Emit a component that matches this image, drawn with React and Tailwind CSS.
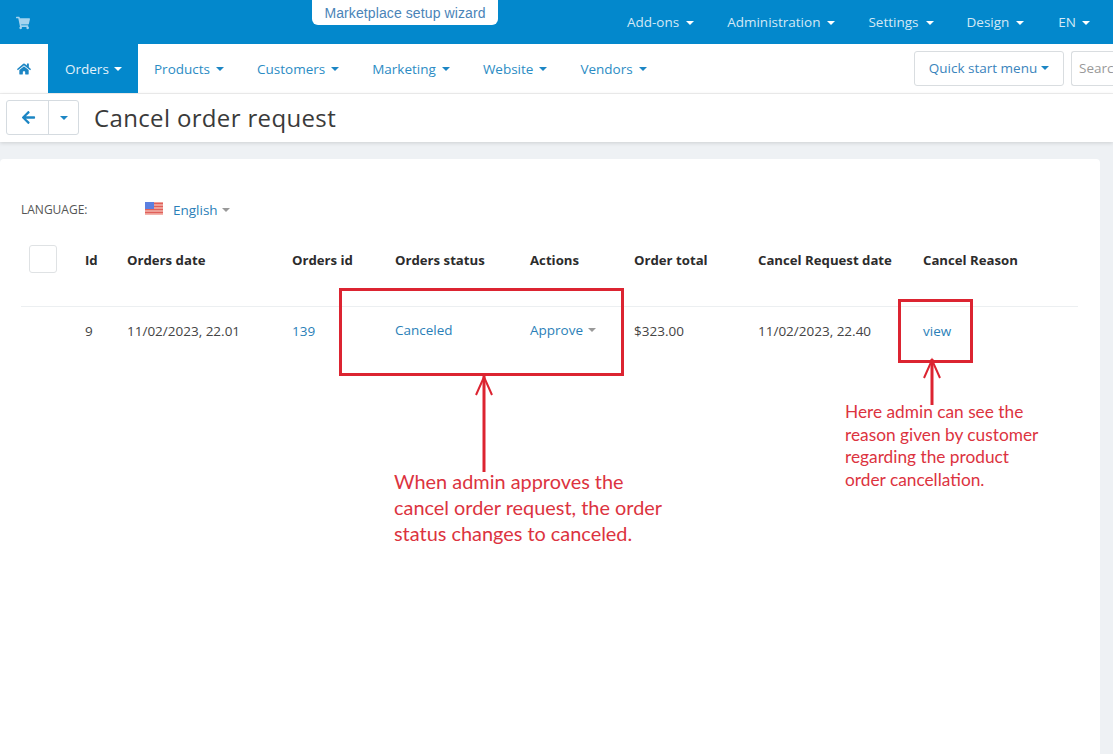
import { FaShoppingCart, FaHome, FaArrowLeft } from "react-icons/fa";

const topLinks = ["Add-ons", "Administration", "Settings", "Design"];
const navLinks = ["Products", "Customers", "Marketing", "Website", "Vendors"];

function Caret({ className = "" }) {
  return (
    <svg viewBox="0 0 8 4" className={`w-2 h-1 fill-current ${className}`}>
      <path d="M0 0h8L4 4z" />
    </svg>
  );
}

function Flag() {
  return (
    <svg viewBox="0 0 18 13" className="w-[18px] h-[13px]">
      <rect width="18" height="13" fill="#f3b4ac" />
      <path d="M0 1.5h18M0 4.5h18M0 7.5h18M0 10.5h18" stroke="#e0605a" strokeWidth="1.4" />
      <rect width="9" height="7" fill="#5b7fe0" />
    </svg>
  );
}

function Arrow({ className, height }) {
  return (
    <svg viewBox={`0 0 20 ${height}`} className={className} fill="none" stroke="#dc2431">
      <path d={`M10 2V${height}`} strokeWidth="3" />
      <path d="M2 21L10 3l8 18" strokeWidth="2" />
    </svg>
  );
}

export default function App() {
  return (
    <div className="relative h-[754px] overflow-hidden bg-[#eef1f4] font-['Open_Sans',sans-serif] text-[13.5px] text-[#333]">
      <header className="relative h-11 bg-[#0388cc] flex items-center pl-4 pr-[23px] pt-[1px] text-[#d4e9f6]">
        <FaShoppingCart className="text-sm text-[#a5d3ee]" />
        <div className="absolute left-[312px] top-0 w-[186px] h-[25px] bg-white rounded-b-md flex items-center justify-center font-['Liberation_Sans',sans-serif] text-sm tracking-[0.1px] text-[#4a84b8]">
          Marketplace setup wizard
        </div>
        <nav className="ml-auto flex items-center gap-[33px]">
          {topLinks.map((link) => (
            <span key={link} className="flex items-center gap-[7px]">
              {link}
              <Caret className="text-white" />
            </span>
          ))}
          <span className="ml-[1px] flex items-center gap-[6px]">
            EN
            <Caret className="text-white" />
          </span>
        </nav>
      </header>

      <div className="h-[50px] bg-white border-b border-[#f0f0f0] flex items-stretch text-[#2b8cc4] overflow-hidden">
        <div className="w-12 flex items-center pl-[17px]">
          <FaHome className="text-sm text-[#1c86c4]" />
        </div>
        <div className="w-[90px] bg-[#0388cc] text-[#e2f1fa] flex items-center pl-[17px] pt-[1px] gap-[5px]">
          Orders
          <Caret className="text-white" />
        </div>
        <nav className="flex items-center pl-4 pt-[1px] gap-[33px]">
          {navLinks.map((link) => (
            <span key={link} className="flex items-center gap-[6px]">
              {link}
              <Caret className="text-[#1c86c4]" />
            </span>
          ))}
        </nav>
        <div className="ml-auto flex items-center gap-[7px] pb-[1px] shrink-0 w-[199px]">
          <button className="w-[150px] h-[35px] shrink-0 border border-[#d9dde0] rounded-[3px] flex items-center justify-center gap-[4px] text-[#3a84bc]">
            Quick start menu
            <Caret className="text-[#1c86c4]" />
          </button>
          <div className="h-[35px] flex-1 border border-r-0 border-[#d9dde0] rounded-l-[3px] flex items-center pl-[7px] text-[#999] overflow-hidden">
            Search
          </div>
        </div>
      </div>

      <div className="h-12 bg-white shadow-[0_1px_4px_rgba(0,0,0,0.14)] flex items-center pl-[6px] pb-[1px]">
        <div className="flex h-[35px] w-[73px] border border-[#d5dbe0] rounded-[3px]">
          <div className="w-[42px] pl-[2px] border-r border-[#d5dbe0] flex items-center justify-center">
            <FaArrowLeft className="text-[15px] text-[#1c86c4]" />
          </div>
          <div className="flex-1 flex items-center justify-center">
            <Caret className="text-[#1c86c4]" />
          </div>
        </div>
        <h1 className="ml-[15px] text-2xl tracking-[0.35px] text-[#3a3a3a]">Cancel order request</h1>
      </div>

      <main className="mt-[17px] w-[1100px] h-[600px] bg-white rounded-t-[4px] pl-[21px] pr-[22px] pt-[41px]">
        <div className="flex items-center h-5">
          <span className="w-[124px] text-xs text-[#555]">LANGUAGE:</span>
          <span className="mb-[3px]"><Flag /></span>
          <span className="ml-[10px] text-[#2b7fb8]">English</span>
          <Caret className="ml-1 text-[#999]" />
        </div>

        <div className="mt-[25px] h-[62px] flex items-start text-[13.2px] font-bold text-[#2c2c2c] border-b border-[#eceff1]">
          <div className="w-[64px] pl-2">
            <div className="w-7 h-7 border border-[#dfe2e4] rounded-[3px]" />
          </div>
          <div className="w-[42px] leading-[30px]">Id</div>
          <div className="w-[165px] leading-[30px]">Orders date</div>
          <div className="w-[103px] leading-[30px]">Orders id</div>
          <div className="w-[135px] leading-[30px]">Orders status</div>
          <div className="w-[104px] leading-[30px]">Actions</div>
          <div className="w-[124px] leading-[30px]">Order total</div>
          <div className="w-[165px] leading-[30px]">Cancel Request date</div>
          <div className="leading-[30px]">Cancel Reason</div>
        </div>

        <div className="h-12 flex items-center text-[#444]">
          <div className="w-[64px]" />
          <div className="w-[42px]">9</div>
          <div className="w-[165px]">11/02/2023, 22.01</div>
          <div className="w-[103px] text-[#2b7fb8]">139</div>
          <div className="w-[135px] text-[#2b7fb8] mb-[2px]">Canceled</div>
          <div className="w-[104px] text-[#2b7fb8] flex items-center gap-[5px] mb-[2px]">
            Approve
            <Caret className="text-[#999]" />
          </div>
          <div className="w-[124px]">$323.00</div>
          <div className="w-[165px]">11/02/2023, 22.40</div>
          <div className="text-[#2b7fb8]">view</div>
        </div>
      </main>

      {/* annotations drawn over the page */}
      <div className="absolute left-[339px] top-[288px] w-[285px] h-[88px] border-[3px] border-[#dc2431]" />
      <div className="absolute left-[898px] top-[299px] w-[75px] h-[64px] border-[3px] border-[#dc2431]" />
      <Arrow className="absolute left-[474px] top-[374px] w-5 h-[98px]" height={98} />
      <Arrow className="absolute left-[922px] top-[357px] w-5 h-[48px]" height={48} />
      <p className="absolute left-[394px] top-[468px] font-['Lato',sans-serif] text-[19.9px] leading-[26px] text-[#dc3340] whitespace-nowrap">
        When admin approves the
        <br />
        cancel order request, the order
        <br />
        status changes to canceled.
      </p>
      <p className="absolute left-[845px] top-[401px] font-['Lato',sans-serif] text-[17.3px] leading-[22.6px] text-[#dc3340] whitespace-nowrap">
        Here admin can see the
        <br />
        reason given by customer
        <br />
        regarding the product
        <br />
        order cancellation.
      </p>
    </div>
  );
}
